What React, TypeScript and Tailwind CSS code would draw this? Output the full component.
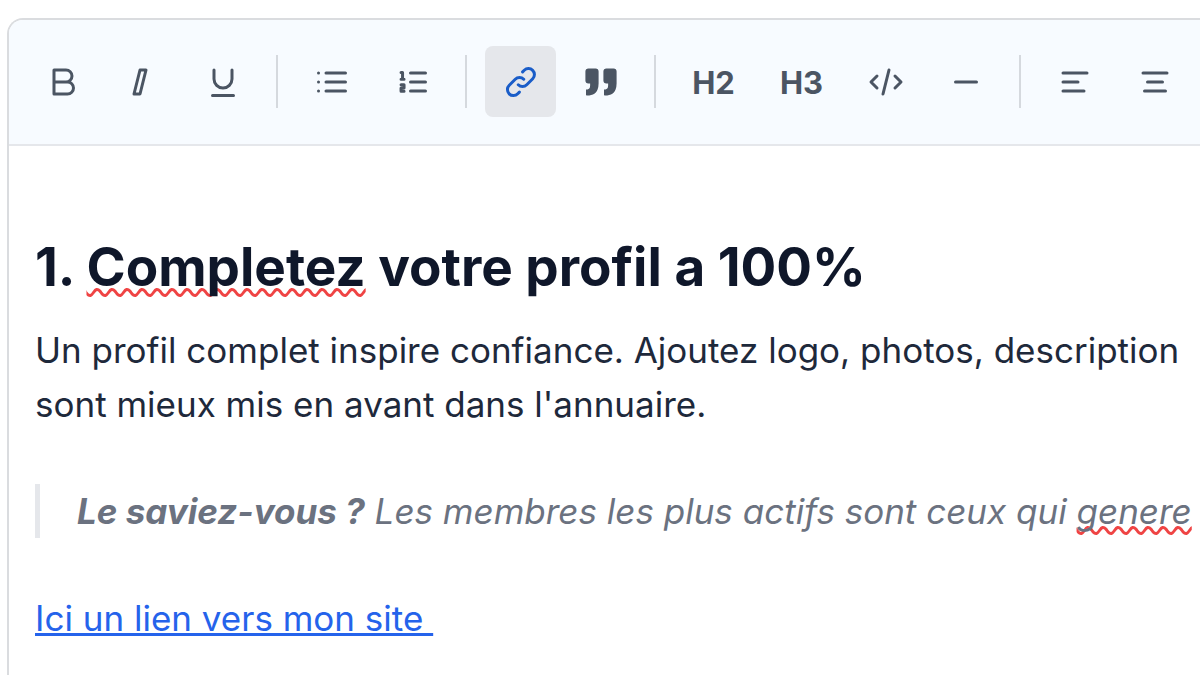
import React, { useState } from 'react';
import clsx from 'clsx';

interface ToolbarButtonProps {
  label: string;
  active?: boolean;
  wide?: boolean;
  onClick?: () => void;
  children: React.ReactNode;
}

const ToolbarButton: React.FC<ToolbarButtonProps> = ({ label, active, wide, onClick, children }) => (
  <button
    type="button"
    aria-label={label}
    aria-pressed={active}
    onClick={onClick}
    className={clsx(
      'flex h-[71px] shrink-0 items-center justify-center rounded-lg text-[31px] font-bold',
      wide ? 'w-[79px] pt-1' : 'w-[71px]',
      active ? 'bg-[#e5e7eb] text-[#1a5dc8]' : 'text-[#4b5563] hover:bg-gray-100'
    )}
  >
    {children}
  </button>
);

const Icon: React.FC<{ d: string; filled?: boolean }> = ({ d, filled }) => (
  <svg
    className="size-9"
    viewBox="0 0 24 24"
    fill={filled ? 'currentColor' : 'none'}
    stroke={filled ? 'none' : 'currentColor'}
    strokeWidth={2}
    strokeLinecap="round"
    strokeLinejoin="round"
  >
    <path d={d} />
  </svg>
);

const Divider = () => <div className="mx-[9px] h-[53px] w-[2px] shrink-0 bg-[#d5d9de]" />;

const Misspelled: React.FC<{ children: React.ReactNode }> = ({ children }) => (
  <span className="underline decoration-[#ef4444] decoration-wavy decoration-[3px] underline-offset-2 [text-decoration-skip-ink:none]">
    {children}
  </span>
);

export default function App() {
  const [linkActive, setLinkActive] = useState(true);

  return (
    <div className="min-h-screen overflow-hidden bg-white pt-[18px] pl-[7px] font-['Inter',sans-serif]">
      <div className="min-h-screen rounded-tl-2xl border-t-2 border-l-2 border-[#dadcdf]">
        {/* Toolbar */}
        <div
          role="toolbar"
          className="flex items-center gap-[9px] overflow-hidden rounded-tl-[14px] border-b-2 border-[#e5e7eb] bg-[#f7fbff] pt-[26px] pb-[27px] pl-[18px]"
        >
          <ToolbarButton label="Gras">
            <Icon d="M6 4h8a4 4 0 010 8H6zM6 12h9a4 4 0 010 8H6z" />
          </ToolbarButton>
          <ToolbarButton label="Italique">
            <Icon d="M10 4h4l-4 16H6z" />
          </ToolbarButton>
          <ToolbarButton label="Souligné">
            <Icon d="M6 4v6a6 6 0 0012 0V4M5 21h14" />
          </ToolbarButton>
          <Divider />
          <ToolbarButton label="Liste à puces">
            <Icon d="M8 6h13M8 12h13M8 18h13M3 6h.01M3 12h.01M3 18h.01" />
          </ToolbarButton>
          <ToolbarButton label="Liste numérotée">
            <Icon d="M11 6h10M11 12h10M11 18h10M4.7 5.6h1v4.6M4.7 10.2h2M4.7 13.8h2v2.2h-2v2.2h2" />
          </ToolbarButton>
          <Divider />
          <ToolbarButton label="Lien" active={linkActive} onClick={() => setLinkActive(!linkActive)}>
            <Icon d="M13.828 10.172a4 4 0 00-5.656 0l-4 4a4 4 0 105.656 5.656l1.102-1.101m-.758-4.899a4 4 0 005.656 0l4-4a4 4 0 00-5.656-5.656l-1.1 1.1" />
          </ToolbarButton>
          <ToolbarButton label="Citation">
            <Icon
              filled
              d="M3 21c3 0 7.4-1 7.4-8V5c0-1.25-.756-2.017-2-2H3.6c-1.25 0-2 .75-2 1.972V11c0 1.25.75 2 2 2h1.15c0 2.25.25 4-2.75 4v3c0 1 0 1 1 1zM15 21c3 0 7.4-1 7.4-8V5c0-1.25-.757-2.017-2-2h-4.8c-1.25 0-2 .75-2 1.972V11c0 1.25.75 2 2 2h1.15c0 2.25.25 4-2.75 4v3c0 1 0 1 1 1z"
            />
          </ToolbarButton>
          <Divider />
          <ToolbarButton label="Titre 2" wide>H2</ToolbarButton>
          <ToolbarButton label="Titre 3" wide>H3</ToolbarButton>
          <ToolbarButton label="Code">
            <Icon d="M10 20l4-16m4 4l4 4-4 4M6 16l-4-4 4-4" />
          </ToolbarButton>
          <ToolbarButton label="Séparateur">
            <Icon d="M5 12h14" />
          </ToolbarButton>
          <Divider />
          <ToolbarButton label="Aligner à gauche">
            <Icon d="M4 6h16M4 12h10M4 18h14" />
          </ToolbarButton>
          <ToolbarButton label="Centrer">
            <Icon d="M4 6h16M7 12h10M5 18h14" />
          </ToolbarButton>
        </div>

        {/* Editor content */}
        <div className="pt-[88px] pl-[26px] text-[35px] leading-[54px] whitespace-nowrap text-[#1e293b]">
          <h2 className="text-[53px] leading-[66px] font-bold text-[#0f172a]">
            1. <Misspelled>Completez</Misspelled> votre profil a 100%
          </h2>
          <p className="mt-[23px]">
            Un profil complet inspire confiance. Ajoutez logo, photos, description
            <br />
            sont mieux mis en avant dans l'annuaire.
          </p>
          <blockquote className="mt-[53px] border-l-[5px] border-[#e5e7eb] pl-[37px] text-[#6b7280] italic">
            <strong className="font-bold">Le saviez-vous ?</strong> Les membres les plus actifs sont ceux qui{' '}
            <Misspelled>genere</Misspelled>
          </blockquote>
          <p className="mt-[53px]">
            <a href="#site" className="whitespace-pre text-[#2563eb] underline">{'Ici un lien vers mon site '}</a>
          </p>
        </div>
      </div>
    </div>
  );
}
